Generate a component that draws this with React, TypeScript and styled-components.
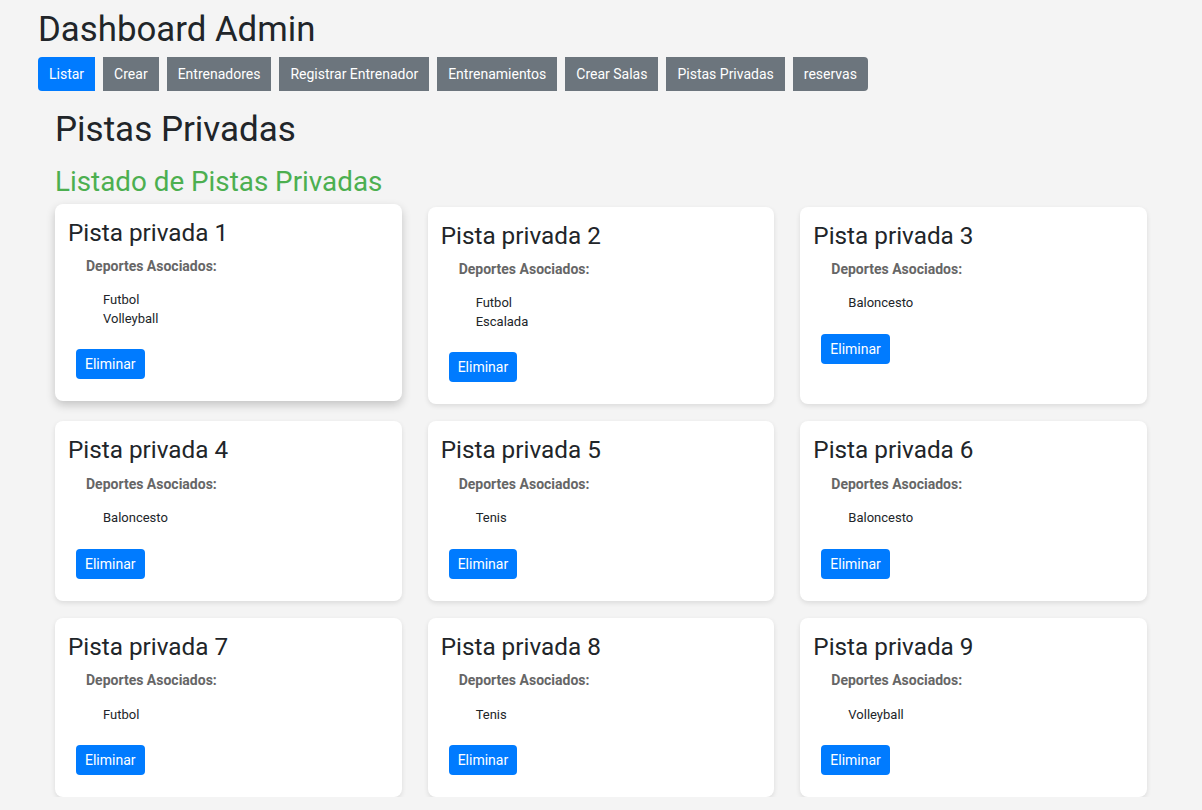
import React from "react";
import styled, { createGlobalStyle, css } from "styled-components";

const GlobalStyle = createGlobalStyle`
  * { box-sizing: border-box; }
  html, body {
    margin: 0;
    padding: 0;
    background: #f4f4f4;
    font-family: Roboto, "Liberation Sans", Arial, sans-serif;
    color: #212529;
  }
`;

const Header = styled.header`
  padding: 9px 38px 0;
`;

const Title = styled.h1`
  margin: 0 0 7px;
  font-size: 34.8px;
  font-weight: 400;
  line-height: 41px;
  color: #212529;
`;

const Nav = styled.nav`
  display: flex;
  gap: 8px;
`;

const NavButton = styled.button<{ $active?: boolean; $first?: boolean; $last?: boolean }>`
  height: 34px;
  padding: 0 11px;
  border: none;
  border-radius: ${(p) => (p.$first ? "4px 0 0 4px" : p.$last ? "0 4px 4px 0" : "0")};
  background: ${(p) => (p.$active ? "#007bff" : "#6c757d")};
  color: #fff;
  font-family: Roboto, "Liberation Sans", Arial, sans-serif;
  font-size: 14px;
  cursor: pointer;
`;

const Main = styled.main`
  padding: 18px 55px 0;
`;

const PageTitle = styled.h2`
  margin: 0 0 16px;
  font-size: 35px;
  font-weight: 400;
  line-height: 41px;
  color: #212529;
`;

const SubTitle = styled.h3`
  margin: 0 0 8px;
  font-size: 27.8px;
  font-weight: 400;
  line-height: 1.172;
  color: #4caf50;
`;

const Grid = styled.div`
  display: grid;
  grid-template-columns: repeat(3, 1fr);
  gap: 17px 26px;
`;

const Card = styled.div<{ $hover?: boolean }>`
  background: #fff;
  border-radius: 8px;
  padding: 15px 13px 22px;
  box-shadow: 0 2px 5px rgba(0, 0, 0, 0.1);
  ${(p) =>
    p.$hover &&
    css`
      transform: translateY(-3px);
      box-shadow: 0 4px 10px rgba(0, 0, 0, 0.2);
    `}
`;

const CardTitle = styled.h4`
  margin: 0 0 11px;
  font-size: 24.3px;
  font-weight: 400;
  line-height: 1.172;
  color: #212529;
`;

const SportsLabel = styled.p`
  margin: 0 0 17px 18px;
  font-size: 14px;
  font-weight: 700;
  line-height: 1.172;
  color: #666;
`;

const SportsList = styled.ul`
  margin: 0 0 21px 35px;
  padding: 0;
  list-style: none;
`;

const SportItem = styled.li`
  font-size: 13px;
  line-height: 18.5px;
  color: #212529;
`;

const DeleteButton = styled.button`
  margin-left: 8px;
  height: 30px;
  padding: 0 9px;
  border: none;
  border-radius: 4px;
  background: #007bff;
  color: #fff;
  font-family: Roboto, "Liberation Sans", Arial, sans-serif;
  font-size: 14px;
  cursor: pointer;
`;

const navItems = [
  "Listar",
  "Crear",
  "Entrenadores",
  "Registrar Entrenador",
  "Entrenamientos",
  "Crear Salas",
  "Pistas Privadas",
  "reservas",
];

const pistas: { name: string; sports: string[] }[] = [
  { name: "Pista privada 1", sports: ["Futbol", "Volleyball"] },
  { name: "Pista privada 2", sports: ["Futbol", "Escalada"] },
  { name: "Pista privada 3", sports: ["Baloncesto"] },
  { name: "Pista privada 4", sports: ["Baloncesto"] },
  { name: "Pista privada 5", sports: ["Tenis"] },
  { name: "Pista privada 6", sports: ["Baloncesto"] },
  { name: "Pista privada 7", sports: ["Futbol"] },
  { name: "Pista privada 8", sports: ["Tenis"] },
  { name: "Pista privada 9", sports: ["Volleyball"] },
];

export default function App() {
  return (
    <>
      <GlobalStyle />
      <Header>
        <Title>Dashboard Admin</Title>
        <Nav>
          {navItems.map((label, i) => (
            <NavButton
              key={label}
              $active={i === 0}
              $first={i === 0}
              $last={i === navItems.length - 1}
            >
              {label}
            </NavButton>
          ))}
        </Nav>
      </Header>
      <Main>
        <PageTitle>Pistas Privadas</PageTitle>
        <SubTitle>Listado de Pistas Privadas</SubTitle>
        <Grid>
          {pistas.map((p, i) => (
            <Card key={p.name} $hover={i === 0}>
              <CardTitle>{p.name}</CardTitle>
              <SportsLabel>Deportes Asociados:</SportsLabel>
              <SportsList>
                {p.sports.map((s) => (
                  <SportItem key={s}>{s}</SportItem>
                ))}
              </SportsList>
              <DeleteButton>Eliminar</DeleteButton>
            </Card>
          ))}
        </Grid>
      </Main>
    </>
  );
}
